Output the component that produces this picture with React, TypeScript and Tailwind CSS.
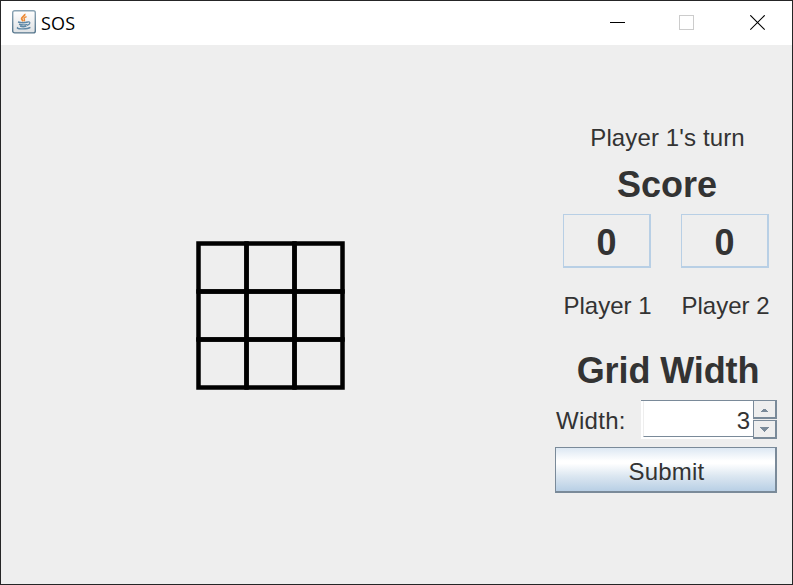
import React from "react";

const ARIAL = "font-['Liberation_Sans',Arial,sans-serif]";

function JavaIcon() {
  return (
    <svg className="block h-6 w-6" viewBox="0 0 24 24" fill="none">
      <defs>
        <linearGradient id="tile" x1="0" y1="0" x2="0" y2="1">
          <stop offset="0" stopColor="#ffffff" />
          <stop offset="0.45" stopColor="#f0f1f2" />
          <stop offset="1" stopColor="#dfe2e5" />
        </linearGradient>
        <linearGradient id="edge" x1="0" y1="0" x2="0" y2="1">
          <stop offset="0" stopColor="#8ba4b4" />
          <stop offset="1" stopColor="#55758c" />
        </linearGradient>
      </defs>
      <rect x="0.7" y="0.7" width="22.6" height="22.2" rx="2" fill="url(#tile)" stroke="url(#edge)" strokeWidth="1.4" />
      <path d="M12.7 3.8c1 2-3.4 3-3.1 5 .2 1 1.2 1.6 1.6 2.6" stroke="#ec8a35" strokeWidth="1.8" />
      <path d="M14.6 6.6c-2.3.8-3 1.7-2.3 2.6.5.7.4 1.3-.3 2.1" stroke="#ec8a35" strokeWidth="1.4" />
      <path d="M6 12c2.8.9 7.3.8 9.8 0M7 14.3c2.7.7 5.9.7 8.3 0M8 16.2c2.1.6 4.5.6 6.4 0" stroke="#5f88a5" strokeWidth="1.4" />
      <path d="M15.6 11.9c3.4-.5 2.8 2.6-.7 3.4" stroke="#5f88a5" strokeWidth="1.2" />
      <path d="M6.2 17.3c-4.4 1.6 8.5 2.5 12.2.1" stroke="#5f88a5" strokeWidth="1.3" />
    </svg>
  );
}

function TitleBar() {
  return (
    <header className="flex h-11 shrink-0 items-center bg-white pl-[11px]">
      <div className="-mt-[3px]"><JavaIcon /></div>
      <span className="ml-[5px] font-['Open_Sans','Noto_Sans',sans-serif] text-[18px] leading-6 tracking-[0.15px] text-black">SOS</span>
      <div className="ml-auto flex h-full items-start pr-[26px] pt-[14px]">
        <svg className="h-4 w-4" viewBox="0 0 16 16" shapeRendering="crispEdges">
          <path d="M0 7h15v1H0z" fill="#000" />
        </svg>
        <svg className="ml-[53px] h-4 w-4" viewBox="0 0 16 16" shapeRendering="crispEdges">
          <path d="M0.5 0.5h14v14h-14z" fill="none" stroke="#ccc" />
        </svg>
        <svg className="ml-[55px] h-4 w-4" viewBox="0 0 16 16">
          <path d="M0.3 0.3l14.4 14.4M14.7 0.3L0.3 14.7" stroke="#000" strokeWidth="1.15" />
        </svg>
      </div>
    </header>
  );
}

const CELL = 48;

function Board() {
  return (
    <svg className="ml-[195px] mt-[196px] h-[149px] w-[149px] shrink-0" viewBox="0 0 149 149">
      {[0, 1, 2].map((row) =>
        [0, 1, 2].map((col) => (
          <rect
            key={`${row}-${col}`}
            x={2.5 + col * CELL}
            y={2.5 + row * CELL}
            width={CELL}
            height={CELL}
            fill="none"
            stroke="#000"
            strokeWidth="4.5"
          />
        )),
      )}
    </svg>
  );
}

function Score({ name, value }: { name: string; value: number }) {
  return (
    <div className="flex w-[88px] flex-col items-center">
      <div className="flex h-[54px] w-full items-center justify-center border border-b-2 border-r-2 border-[#b8cfe5] pt-[5px] text-[36px] font-bold leading-none">
        {value}
      </div>
      <div className="mt-6 whitespace-nowrap pl-px text-2xl leading-7">{name}</div>
    </div>
  );
}

function Spinner() {
  return (
    <div className="flex h-[39px] w-[136px]">
      <div className="h-[39px] w-28 border-t border-[#7a8a99] bg-white pl-0.5">
        <div className="flex h-9 items-center justify-end border-b border-l border-b-[#7a8a99] border-l-[#eeeeee] pr-[3px] pt-1 text-2xl leading-none">
          3
        </div>
      </div>
      <div className="flex w-6 flex-col justify-between">
        <button aria-label="Increase" className="flex h-[19px] items-center justify-center border border-b-2 border-r-2 border-[#7a8a99] bg-[#eeeeee] pt-[3px]">
          <svg className="h-[3px] w-[7px]" viewBox="0 0 7 3" shapeRendering="crispEdges">
            <path d="M2 0h3v1h1v1h1v1H0V2h1V1h1z" fill="#7a8a99" />
          </svg>
        </button>
        <button aria-label="Decrease" className="flex h-[19px] items-center justify-center border border-b-2 border-r-2 border-[#7a8a99] bg-[#eeeeee] pt-px">
          <svg className="h-[5px] w-[9px]" viewBox="0 0 9 5" shapeRendering="crispEdges">
            <path d="M0 0h9v1H8v1H7v1H6v1H5v1H4V4H3V3H2V2H1V1H0z" fill="#7a8a99" />
          </svg>
        </button>
      </div>
    </div>
  );
}

function ControlPanel() {
  return (
    <aside className="ml-auto mr-[15px] flex w-[222px] flex-col pt-[79px]">
      <p className="pl-[3px] text-center text-2xl leading-7 tracking-[0.12px]">Player 1's turn</p>
      <h2 className="mt-[13px] pl-[2px] text-center text-[36px] font-bold leading-10">Score</h2>
      <div className="mt-[9px] flex justify-between px-2">
        <Score name="Player 1" value={0} />
        <Score name="Player 2" value={0} />
      </div>
      <h2 className="mt-[31px] whitespace-nowrap pl-1 text-center text-[36px] font-bold leading-10 tracking-[-0.1px]">Grid Width</h2>
      <div className="mt-[9px] flex justify-between">
        <label className="pl-px pt-[7px] text-2xl leading-7 tracking-[0.3px]">Width:</label>
        <Spinner />
      </div>
      <button className="mt-2 flex h-[46px] items-center justify-center border border-b-2 border-r-2 border-[#7a8a99] bg-[linear-gradient(to_bottom,#dde8f3_0%,#ffffff_30%,#ffffff_36%,#dce7f1_65%,#b8cfe5_100%)] pl-[2px] pt-1 text-2xl leading-7 tracking-[0.2px]">
        Submit
      </button>
    </aside>
  );
}

export default function App() {
  return (
    <div className={`flex h-[585px] w-[793px] flex-col border border-[#252526] bg-[#eeeeee] text-[#333333] ${ARIAL}`}>
      <TitleBar />
      <main className="flex min-h-0 flex-1">
        <Board />
        <ControlPanel />
      </main>
    </div>
  );
}
